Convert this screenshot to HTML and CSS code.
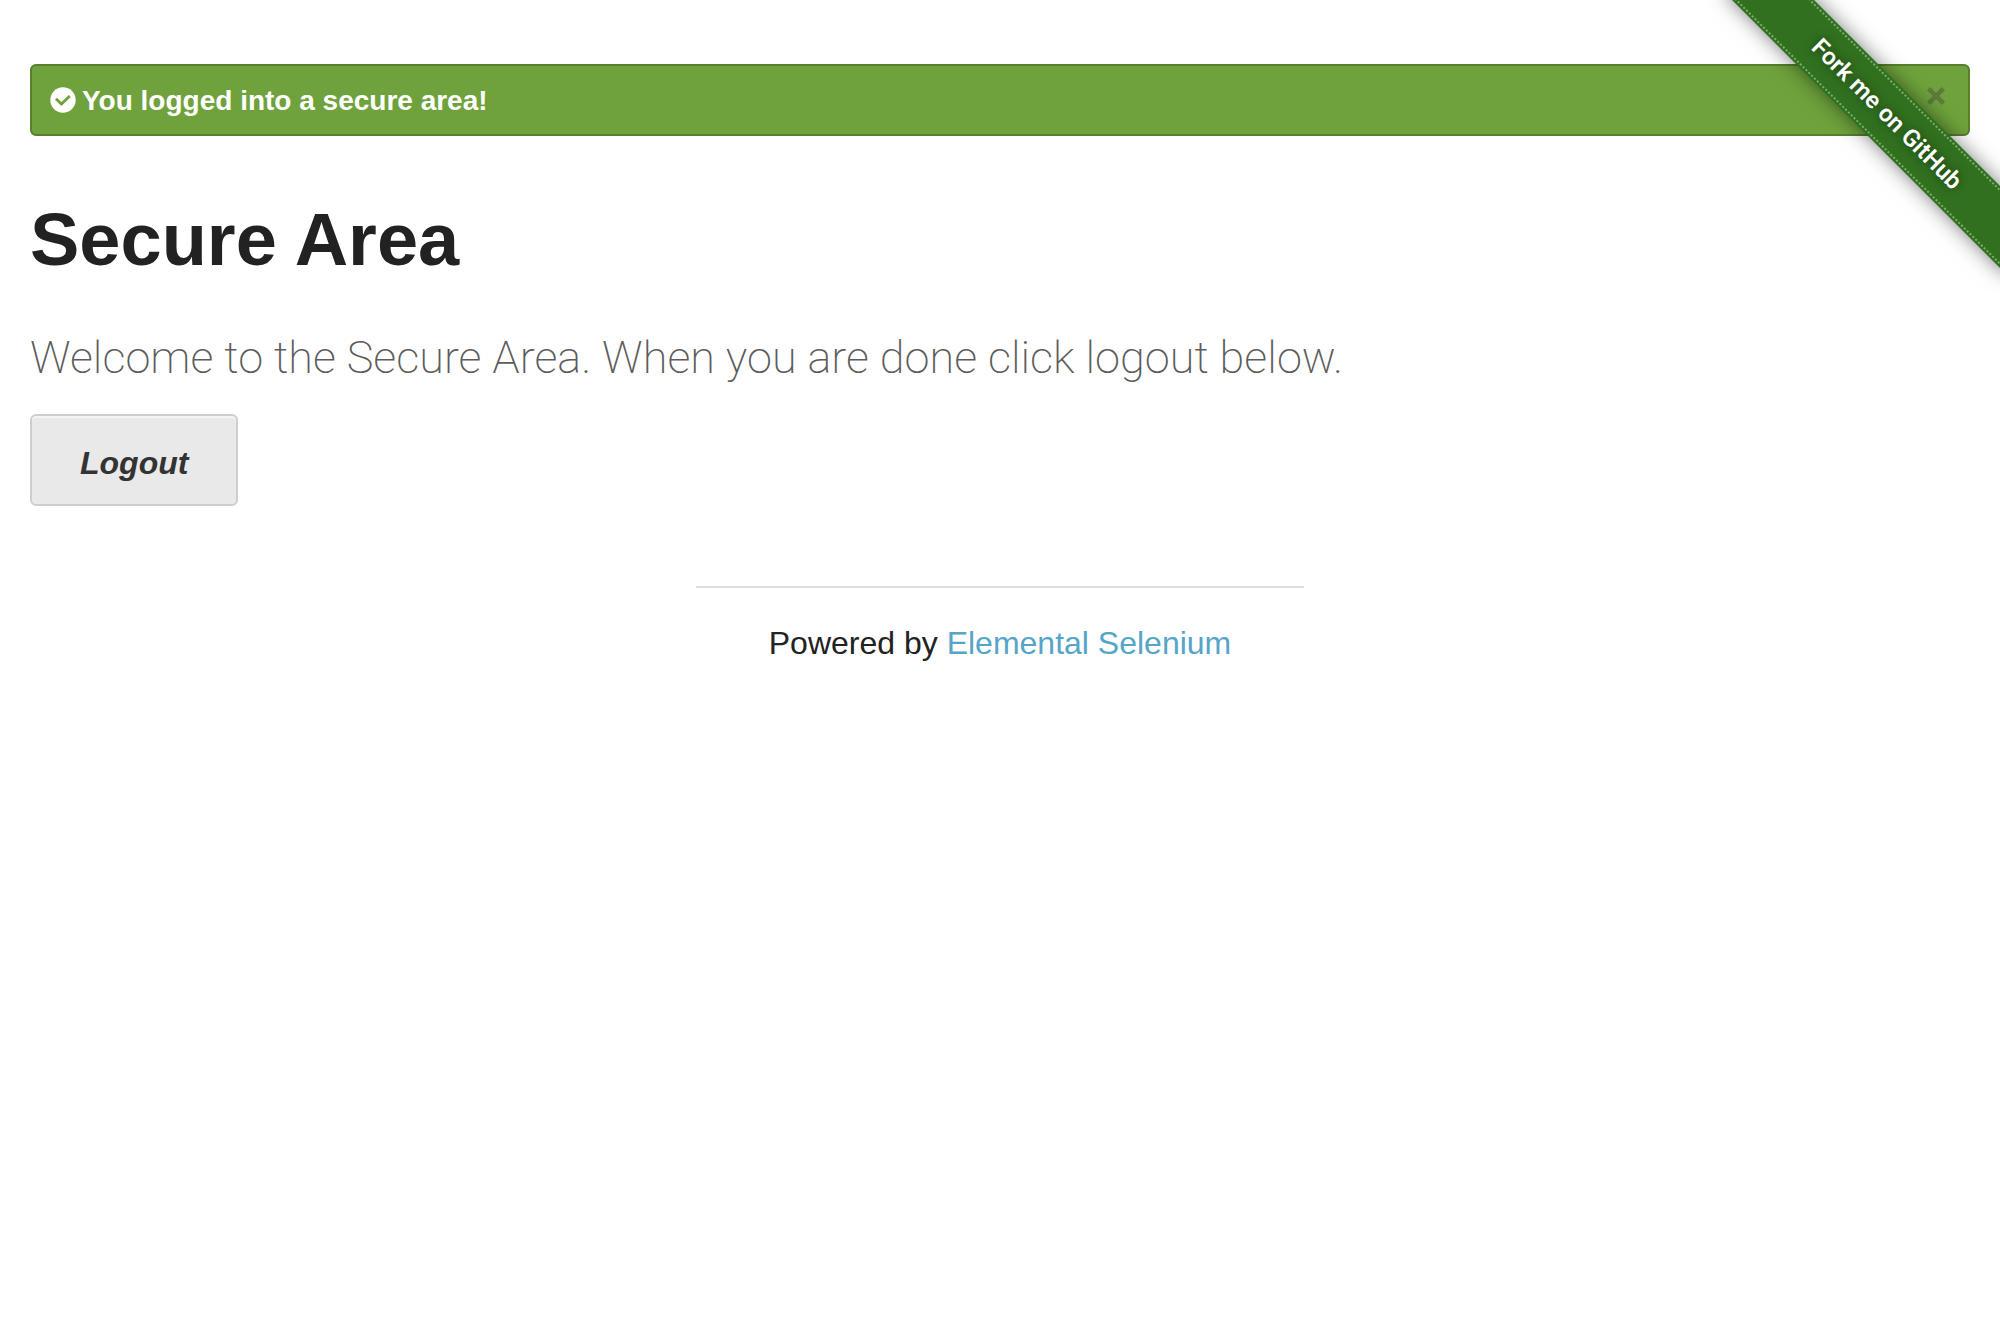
FILE: index.html
```
<!DOCTYPE html>
<html lang="en">
<head>
  <meta charset="utf-8">
  <meta name="viewport" content="width=device-width, initial-scale=1">
  <title>Secure Area</title>
  <link rel="stylesheet" href="styles.css">
</head>
<body>
  <div class="fork">
    <a class="fork-ribbon" href="#fork"><span class="fork-text">Fork me on GitHub</span></a>
  </div>
  <div class="page">
    <div class="alert" role="status">
      <svg class="alert-icon" viewBox="0 0 26 26" aria-hidden="true">
        <circle cx="13" cy="13" r="12.7" fill="#fff"/>
        <path d="M6 11.8l5.4 5.2 8.4-8" fill="none" stroke="#6fa23c" stroke-width="2.8"/>
      </svg>
      <span class="alert-text">You logged into a secure area!</span>
      <button class="alert-close" type="button" aria-label="Close">
        <svg class="close-icon" viewBox="0 0 18 18" aria-hidden="true">
          <path d="M1.6 1.6l14.8 14.8M16.4 1.6L1.6 16.4" fill="none" stroke="#5a7c3b" stroke-width="4.5"/>
        </svg>
      </button>
    </div>
    <main class="content">
      <h2 class="title">Secure Area</h2>
      <h4 class="subheader">Welcome to the Secure Area. When you are done click logout below.</h4>
      <a class="button" href="#logout">Logout</a>
    </main>
    <footer class="footer">
      <hr class="rule">
      <div>Powered by <a class="link" href="#selenium">Elemental Selenium</a></div>
    </footer>
  </div>
</body>
</html>
```
FILE: styles.css
```
* {
  box-sizing: border-box;
}

body {
  margin: 0;
  background: #fff;
  color: #222;
  font-family: "Liberation Sans", Arial, sans-serif;
  font-size: 32px;
  line-height: 52px;
}

.page {
  padding: 64px 30px;
}

.alert {
  display: flex;
  align-items: center;
  gap: 6px;
  min-height: 72px;
  padding: 0 23px 0 18px;
  border: 2px solid #567f2e;
  border-radius: 6px;
  background: #6fa23c;
  color: #fff;
  font-size: 28px;
  font-weight: 700;
  line-height: 28px;
}

.alert-icon {
  width: 26px;
  height: 26px;
}

.alert-text {
  flex: 1;
  padding-top: 2px;
}

.alert-close {
  display: flex;
  padding: 0 0 8px;
  border: 0;
  background: none;
}

.close-icon {
  width: 18px;
  height: 18px;
}

.content {
  padding-top: 52px;
}

.title {
  margin: 0 0 34px;
  font-size: 74px;
  line-height: 104px;
}

.subheader {
  margin: 0 0 24px;
  color: #5c5c5c;
  font-family: Roboto, sans-serif;
  font-size: 45px;
  font-weight: 200;
  line-height: 64px;
}

.button {
  display: block;
  width: fit-content;
  padding: 21px 48px 15px;
  border: 2px solid #cecece;
  border-radius: 6px;
  background: #e9e9e9;
  box-shadow: inset 0 2px 0 #f4f4f4;
  color: #333;
  font-style: italic;
  font-weight: 700;
  text-decoration: none;
}

.footer {
  padding-top: 80px;
  text-align: center;
}

.rule {
  width: 608px;
  max-width: 100%;
  margin: 0 auto 29px;
  border: 0;
  border-top: 2px solid #ddd;
}

.link {
  color: #55a5c8;
  text-decoration: none;
}

.fork {
  position: absolute;
  top: 0;
  right: 0;
  width: 298px;
  height: 298px;
  overflow: hidden;
  pointer-events: none;
}

.fork-ribbon {
  position: absolute;
  top: 85px;
  left: -15px;
  display: block;
  width: 400px;
  height: 58px;
  padding: 2px 0;
  background: #31701f;
  box-shadow: 0 0 20px rgba(0, 0, 0, 0.5);
  color: #fff;
  font-family: Roboto, sans-serif;
  font-size: 24px;
  font-weight: 600;
  line-height: 50px;
  text-align: center;
  text-decoration: none;
  text-shadow: 0 0 8px rgba(0, 0, 0, 0.5);
  transform: rotate(45deg);
  pointer-events: auto;
}

.fork-text {
  display: block;
  border-top: 2px dotted #76b06c;
  border-bottom: 2px dotted #76b06c;
}
```
